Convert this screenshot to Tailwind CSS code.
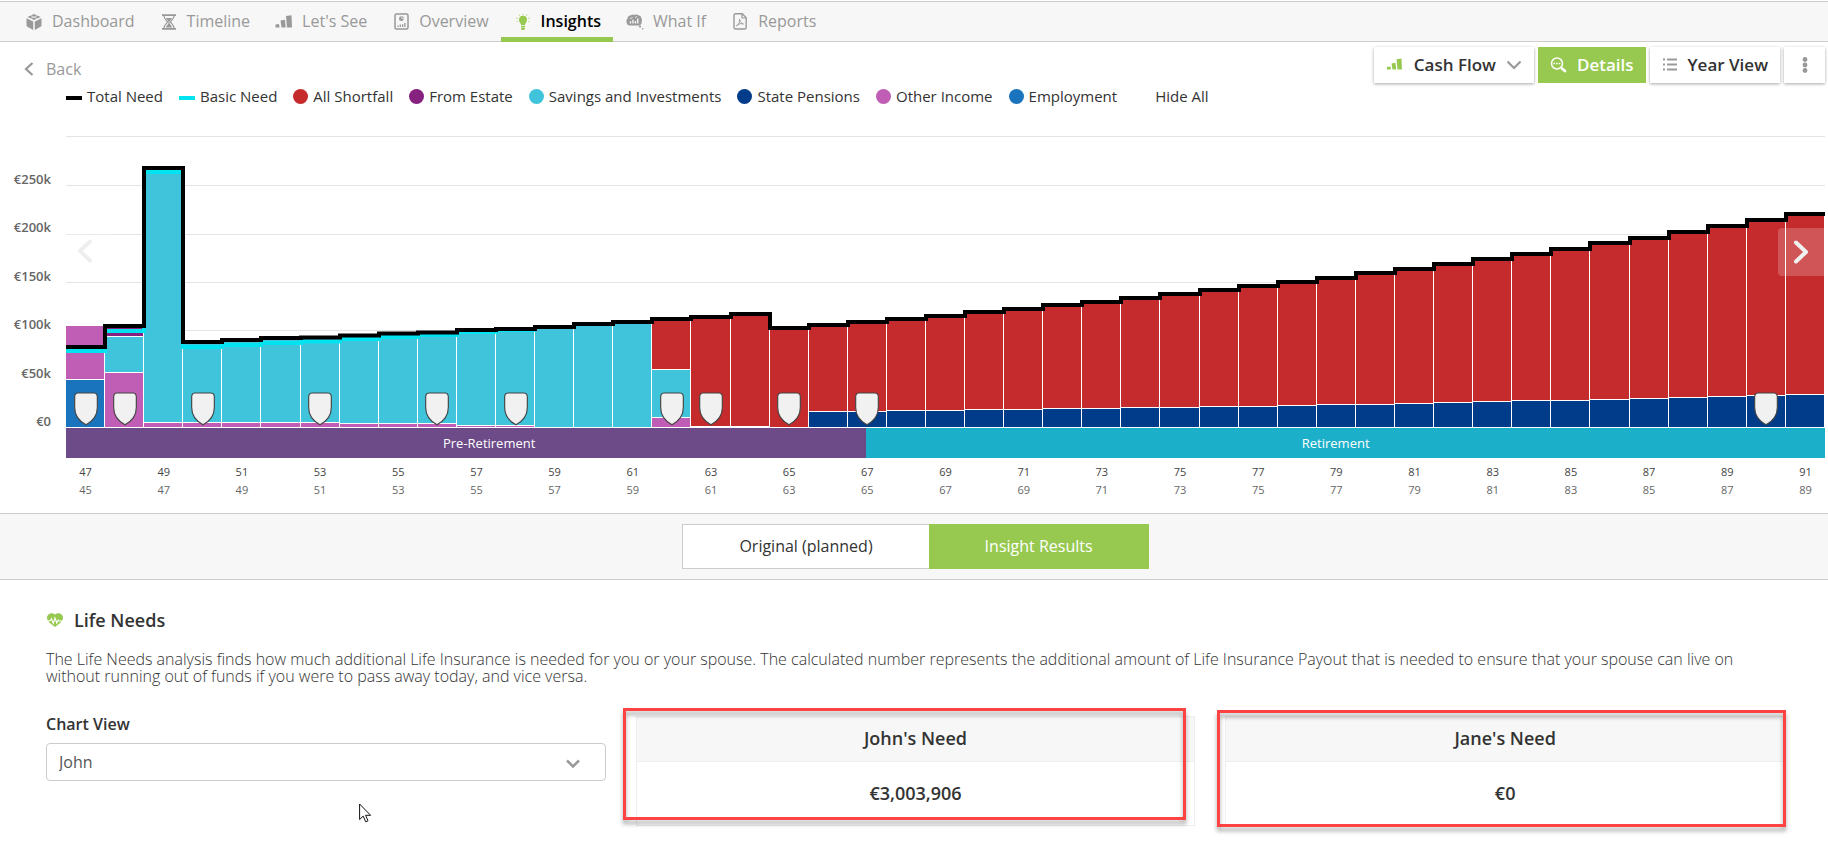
<!DOCTYPE html>
<html lang="en">
<head>
<meta charset="utf-8">
<meta name="viewport" content="width=device-width, initial-scale=1">
<title>Insights – Life Needs</title>
<script src="https://cdn.jsdelivr.net/npm/@tailwindcss/browser@4"></script>
</head>
<body class="bg-white font-['Open_Sans',sans-serif] text-base text-[#333]">

<nav class="mt-px flex h-[41px] border-y border-[#ccc] bg-[#f7f7f7] pl-3 leading-[38px] text-[#999]" aria-label="Main">
  <a href="#" class="flex gap-2 px-3"><span class="flex w-5 items-center justify-center">
    <svg class="h-4 w-4" viewBox="0 0 16 16" fill="currentColor"><path d="M8 0l6.600 2.900L8 6 1.400 2.900zM.500 4.300l6.700 3.200V16L1.500 12.800C.900 12.500.500 12 .500 11.300zM15.500 4.300L8.800 7.500V16l5.700-3.200c.600-.300 1-.800 1-1.500z"/><path d="M4.500 1.500l7 3.300M11.500 1.500l-7 3.300" stroke="#f7f7f7" stroke-width=".7"/></svg></span>Dashboard</a>
  <a href="#" class="flex gap-2 px-3"><span class="flex w-5 items-center justify-center">
    <svg class="h-4 w-4" viewBox="0 0 16 16" fill="none" stroke="currentColor"><path d="M1 1.200h14M1 14.800h14" stroke-width="1.800"/><path d="M3 2c0 3.300 3 4.500 3.500 6C6 9.500 3 10.700 3 14M13 2c0 3.300-3 4.500-3.500 6 .500 1.500 3.500 2.700 3.500 6" stroke-width="1.200"/><path d="M4.800 4h6.400L8.600 7.500v2l2.800 4H4.600l2.800-4v-2z" fill="currentColor" stroke="none"/></svg></span>Timeline</a>
  <a href="#" class="flex gap-2 px-3"><span class="flex w-5 items-center justify-center">
    <svg class="h-4 w-[18px]" viewBox="0 0 18 16" fill="currentColor"><path d="M.500 10.500l3.500-.500.500 3.500H.500zM5.500 6.500L10 5.800l.700 7.700H6.500zM11 2l5.500-.800.500 12.300h-5z"/></svg></span>Let's See</a>
  <a href="#" class="flex gap-2 px-3"><span class="flex w-5 items-center justify-center">
    <svg class="h-[17px] w-[15px]" viewBox="0 0 15 17" fill="none" stroke="currentColor"><rect x="1" y="1" width="13" height="15" rx="1.500" stroke-width="1.500"/><path d="M7.500 3.300v2.400h2.300A2.400 2.400 0 1 1 7.500 3.300z" fill="currentColor" stroke="none"/><path d="M8.400 3v1.700h1.800" stroke-width=".8"/><path d="M4 14v-1.500M6.300 14v-2.500M8.600 14v-2.800M10.900 14v-4" stroke-width="1.300"/></svg></span>Overview</a>
  <a href="#" aria-current="page" class="-mb-px flex gap-2 px-3 font-semibold text-black shadow-[inset_0_-5px_#97c950]"><span class="flex w-5 items-center justify-center text-[#97c950]">
    <svg class="h-4 w-[14px]" viewBox="0 0 14 16" fill="currentColor"><path d="M7 1.800a4 4 0 0 1 4 4c0 1.400-.6 2.300-1.200 3.200-.5.700-.8 1.300-.8 2H5c0-.700-.3-1.300-.8-2C3.600 8.100 3 7.200 3 5.800a4 4 0 0 1 4-4zM5 11.800h4v1.100H5zM5 13.600h4v1L8.200 16H5.800L5 14.600z"/><path d="M7 0v1M3 .700l.6 1M11 .700l-.6 1M.3 4l1.400.300M13.700 4l-1.400.300M.8 7.800l1-.4M13.200 7.800l-1-.4" stroke="currentColor" stroke-width=".8"/></svg></span>Insights</a>
  <a href="#" class="flex gap-2 px-3"><span class="flex w-5 items-center justify-center">
    <svg class="h-4 w-[18px]" viewBox="0 0 18 16" fill="currentColor"><path d="M5 1.200C6 .3 7.800.2 8.800 1c1.300-.7 3-.5 4 .500 1.400.1 2.500 1.300 2.500 2.700.8 1 .9 2.500.3 3.700.2 1.700-.8 3.200-2.600 3.600H3.800C1.800 11.500.4 10 .7 8.200c-.6-1.200-.3-2.700.8-3.500C1.500 2.700 3 1.300 5 1.200z"/><path d="M4.500 9.500V7.200M7 9.500V5.800M9.500 9.500V7M11.800 9.500v-5" stroke="#f7f7f7" stroke-width="1.400"/><path d="M4 4.800l2.500-1.300M9 3.500l2-.9" stroke="#f7f7f7" stroke-width=".8"/><circle cx="14" cy="12.600" r="1.100"/><circle cx="16.700" cy="14.800" r=".8"/></svg></span>What If</a>
  <a href="#" class="flex gap-2 px-3"><span class="flex w-5 items-center justify-center">
    <svg class="h-[17px] w-[14px]" viewBox="0 0 14 17" fill="none" stroke="currentColor"><path d="M2.500.800H9.300L13.200 4.700V14.500a1.500 1.500 0 0 1-1.500 1.500H2.500A1.500 1.500 0 0 1 1 14.500V2.300A1.500 1.500 0 0 1 2.500.800z" stroke-width="1.400"/><path d="M9 1v4h4" stroke-width="1.200"/><path d="M6.500 6c.6 3-1 5.600-3 7 .2-1.500 4-3 7-2-1.700-.2-3.600-2-4-5z" stroke-width=".9"/></svg></span>Reports</a>
</nav>

<main>
  <section aria-label="Cash flow chart">
    <div class="flex items-start justify-between pr-[3px]">
      <div class="pt-[15px]">
        <a href="#" class="ml-6 flex h-6 items-center gap-3 text-[#999]">
          <svg class="h-[14px] w-[10px]" viewBox="0 0 10 14" fill="none" stroke="currentColor" stroke-width="2.200"><path d="M8.500 1L2 7l6.500 6"/></svg>Back</a>
        <div class="ml-[66px] mt-[5px] flex flex-wrap items-center gap-x-4 text-[15px] leading-5">
          <span class="flex items-center gap-[5px]"><i class="mt-1 h-1 w-4 bg-black"></i>Total Need</span>
          <span class="flex items-center gap-[5px]"><i class="mt-1 h-1 w-4 bg-[#00e3f0]"></i>Basic Need</span>
          <span class="flex items-center gap-[5px]"><i class="size-[15px] rounded-full bg-[#c52b2d]"></i>All Shortfall</span>
          <span class="flex items-center gap-[5px]"><i class="size-[15px] rounded-full bg-[#87217f]"></i>From Estate</span>
          <span class="flex items-center gap-[5px]"><i class="size-[15px] rounded-full bg-[#3fc4db]"></i>Savings and Investments</span>
          <span class="flex items-center gap-[5px]"><i class="size-[15px] rounded-full bg-[#003c8a]"></i>State Pensions</span>
          <span class="flex items-center gap-[5px]"><i class="size-[15px] rounded-full bg-[#c05db4]"></i>Other Income</span>
          <span class="flex items-center gap-[5px]"><i class="size-[15px] rounded-full bg-[#1974bd]"></i>Employment</span>
          <button type="button" class="ml-[22px]">Hide All</button>
        </div>
      </div>
      <div class="flex gap-1 pt-[5px] text-[17px] font-semibold">
        <button type="button" class="flex h-9 items-center gap-[10px] bg-white px-3 shadow-[0_1px_3px_rgba(0,0,0,0.35)]">
          <svg class="h-4 w-[18px] text-[#97c950]" viewBox="0 0 18 16" fill="currentColor"><path d="M1 10l3.500-.500.300 3H1zM5.500 6.500L9.500 5.800l.700 6.700H6.500zM10.500 2.300l5-.800.500 11h-4.500z"/></svg>Cash Flow
          <svg class="h-[10px] w-4" viewBox="0 0 16 10" fill="none" stroke="#999" stroke-width="2.200"><path d="M1.500 1.500L8 8l6.500-6.500"/></svg></button>
        <button type="button" class="flex h-9 items-center gap-[10px] bg-[#97c950] px-3 text-white">
          <svg class="h-4 w-[17px]" viewBox="0 0 17 16" fill="none" stroke="currentColor"><circle cx="7" cy="6.500" r="5.500" stroke-width="1.500"/><path d="M3.500 6.500h7" stroke-width="1.500" stroke-dasharray="1.600 1"/><path d="M11 10.500l1.200 1.100" stroke-width="1.500"/><path d="M12 11.500l3 2.500" stroke-width="2.800" stroke-linecap="round"/></svg>Details</button>
        <button type="button" class="flex h-9 items-center gap-[10px] bg-white px-3 shadow-[0_1px_3px_rgba(0,0,0,0.35)]">
          <svg class="h-4 w-4" viewBox="0 0 16 16" fill="none" stroke="#999" stroke-width="2"><path d="M1 2.500h2M1 7.500h2M1 12.500h2M5 2.500h10M5 7.500h10M5 12.500h10"/></svg>Year View</button>
        <button type="button" aria-label="More" class="flex h-9 w-[41px] items-center justify-center bg-white shadow-[0_1px_3px_rgba(0,0,0,0.35)]">
          <svg class="h-4 w-[6px]" viewBox="0 0 6 16" fill="#999"><circle cx="3" cy="2.500" r="2.400"/><circle cx="3" cy="8" r="2.400"/><circle cx="3" cy="13.500" r="2.400"/></svg></button>
      </div>
    </div>

    <div class="mt-6 flex pr-[3px]">
      <div class="-mb-[3px] flex w-[66px] flex-col items-end justify-between pr-[15px] pt-[39px] text-[13px] font-semibold leading-5 text-[#666]">
        <span>€250k</span><span>€200k</span><span>€150k</span><span>€100k</span><span>€50k</span><span>€0</span>
      </div>
      <div id="plot" class="relative min-w-0 flex-1">
        <svg id="bars" class="block h-[298px] w-full" viewBox="0 130 1759 298" preserveAspectRatio="none" role="img" aria-label="Yearly need and income by source"></svg>
        <button type="button" aria-label="Earlier years" class="absolute left-0 top-[97px] flex h-12 w-[46px] items-center justify-center bg-white/20 pr-2">
          <svg class="h-6 w-4" viewBox="0 0 16 24" fill="none" stroke="#eee" stroke-width="4" stroke-linecap="round" stroke-linejoin="round"><path d="M13 2.500L3 12l10 9.500"/></svg></button>
        <button type="button" aria-label="Later years" class="absolute right-px top-[98px] flex h-12 w-[46px] items-center justify-center rounded-l bg-white/20">
          <svg class="h-6 w-4" viewBox="0 0 16 24" fill="none" stroke="#f0f0f0" stroke-width="4" stroke-linecap="round" stroke-linejoin="round"><path d="M3 2.500L13 12 3 21.500"/></svg></button>
      </div>
    </div>
    <div class="ml-[66px] mr-[3px]">
      <div class="flex h-[30px] text-center text-[13px] leading-[30px] text-white">
        <div class="w-[45.5%] bg-[#6d4a88] pl-[46px]">Pre-Retirement</div>
        <div class="flex-1 bg-[#1cafc9] pr-5">Retirement</div>
      </div>
      <div id="ages" class="mt-[5px] grid grid-cols-45 text-[11px] leading-[18px]"></div>
    </div>
  </section>

  <div class="mt-[14px] flex justify-center border-y border-[#ccc] bg-[#f7f7f7] py-[10px] pl-[3px]">
    <button type="button" class="h-[45px] border border-r-0 border-[#ccc] bg-white px-14 pb-[2px]">Original (planned)</button>
    <button type="button" class="h-[45px] bg-[#97c950] px-14 pb-[2px] text-white">Insight Results</button>
  </div>

  <section class="relative pb-6 pl-[46px] pr-[43px] pt-7">
    <h2 class="flex items-center gap-[10px] text-lg font-semibold leading-6">
      <svg class="h-[14px] w-[18px] text-[#97c950]" viewBox="0 0 18 14" fill="currentColor"><path d="M9 1.800C10.300.300 12.500-.1 14.400.8c2.400 1.100 3.200 3.700 2.200 6C15.500 9.300 12 12 9 14 6 12 2.500 9.300 1.400 6.800c-1-2.300-.2-4.900 2.200-6C5.500-.1 7.700.300 9 1.800z"/><path d="M1 7.800h3.300l1.200-2 1.800 4.500L9 5l1.800 5 1.500-3 .7 1H17" fill="none" stroke="#fff" stroke-width="1.100"/></svg>Life Needs</h2>
    <p class="mt-[19px] font-light leading-[17px]">The Life Needs analysis finds how much additional Life Insurance is needed for you or your spouse. The calculated number represents the additional amount of Life Insurance Payout that is needed to ensure that your spouse can live on without running out of funds if you were to pass away today, and vice versa.</p>
    <div class="mt-[31px] grid grid-cols-3 gap-[30px]">
      <div>
        <label for="view" class="block h-[27px] font-semibold leading-4">Chart View</label>
        <div class="relative">
          <select id="view" class="h-[38px] w-full appearance-none rounded border border-[#ccc] bg-white px-3 text-[#555]"><option>John</option><option>Jane</option></select>
          <svg class="pointer-events-none absolute right-[26px] top-4 h-[10px] w-[14px]" viewBox="0 0 14 10" fill="none" stroke="#999" stroke-width="2.500"><path d="M1 1.500l6 6 6-6"/></svg>
        </div>
      </div>
      <div class="relative border border-[#eee] text-center text-lg font-semibold">
        <h3 class="h-[45px] border-b border-[#eee] bg-[#f7f7f7] leading-[43px]">John's Need</h3>
        <p class="h-[63px] leading-[63px]">€3,003,906</p>
        <div class="pointer-events-none absolute -left-[14px] -top-[9px] bottom-[5px] right-2 border-3 border-[#ff4343] drop-shadow-[0_4px_2px_rgba(0,0,0,0.35)]"></div>
      </div>
      <div class="relative border border-[#eee] text-center text-lg font-semibold">
        <h3 class="h-[45px] border-b border-[#eee] bg-[#f7f7f7] leading-[43px]">Jane's Need</h3>
        <p class="h-[63px] leading-[63px]">€0</p>
        <div class="pointer-events-none absolute -left-[9px] -top-[7px] -bottom-[2px] -right-[2px] border-3 border-[#ff4343] drop-shadow-[0_4px_2px_rgba(0,0,0,0.35)]"></div>
      </div>
    </div>
    <svg class="pointer-events-none absolute left-[359px] top-[223px] h-5 w-[13px]" viewBox="0 0 13 20" fill="#fff" stroke="#111" stroke-width="1"><path d="M.600 1v15.500l3.600-3.400 2.500 5.700 2.300-1-2.400-5.500h5z"/></svg>
  </section>
</main>

<script>
  const N = 45, W = 1759, BASE = 427, step = W / N;
  const X = i => Math.round(i * step);
  const RED = '#c52b2d', ESTATE = '#87217f', SAVE = '#3fc4db', PENSION = '#003c8a', OTHER = '#c05db4', JOB = '#1974bd';
  const total = [347,326,168,342,340,338,337.5,335.5,333.5,332.5,330,329,327,324,322,319,317,314,328,325,322,319,316,312,309,305,302,298,294,290,286,282,278,273,269,264,259,254,249,243,238,232,226,220,214];
  const basic = [351,331,172,347,345,343,341.5,339,337,335,332,330];
  const pension = [411,411,410,410,409,409,408,408,407,407,406,406,405,404,404,403,402,401,400,400,399,398,397,396,395,394];
  const stacks = total.map((t, i) => {
    if (i === 0) return [[326, OTHER], [379, JOB]];
    if (i === 1) return [[326, ESTATE], [336, SAVE], [372, OTHER]];
    if (i <= 6) return [[t, SAVE], [422, OTHER]];
    if (i <= 9) return [[t, SAVE], [423, OTHER]];
    if (i <= 11) return [[t, SAVE], [425, OTHER]];
    if (i <= 14) return [[t, SAVE]];
    if (i === 15) return [[t, RED], [369, SAVE], [417, OTHER]];
    if (i <= 17) return [[t, RED], [426, OTHER]];
    if (i === 18) return [[t, RED]];
    return [[t, RED], [pension[i - 19], PENSION]];
  });
  let s = '';
  for (const y of [136, 185, 234, 282, 330]) s += `<rect x="0" y="${y}" width="${W}" height="1" fill="#e4e4e4"/>`;
  stacks.forEach((st, i) => st.forEach(([y, c], k) => {
    const top = k ? y + 1 : y, end = k + 1 < st.length ? st[k + 1][0] : BASE;
    if (k) s += `<rect x="${X(i)}" y="${y}" width="${X(i + 1) - X(i)}" height="1" fill="#fff"/>`;
    s += `<rect x="${X(i)}" y="${top}" width="${X(i + 1) - X(i)}" height="${Math.max(0, end - top)}" fill="${c}"/>`;
    s += `<rect x="${X(i + 1) - 1}" y="${top}" width="1" height="${BASE - top}" fill="#fff"/>`;
  }));
  const line = a => a.map((y, i) => `${i ? 'L' : 'M'}${X(i)} ${y}H${X(i + 1)}`).join('');
  s = `<g shape-rendering="crispEdges">${s}</g>`
    + `<path d="${line(basic)}" fill="none" stroke="#00e3f0" stroke-width="4"/>`
    + `<path d="${line(total)}" fill="none" stroke="#000" stroke-width="4"/>`;
  document.getElementById('bars').innerHTML = s;

  const plot = document.getElementById('plot');
  for (const i of [0, 1, 3, 6, 9, 11, 15, 16, 18, 20, 43])
    plot.insertAdjacentHTML('beforeend', `<svg class="absolute bottom-[2px] h-[34px] w-6 -translate-x-1/2" style="left:${(i + .5) / N * 100}%" viewBox="0 0 25 35" fill="#f1f1f1" stroke="#444" stroke-width="1.200"><path d="M4 .800H21Q24.300 1.200 24.300 5V16C24.300 24 19 30.500 12.500 34 6 30.500.700 24 .700 16V5Q.700 1.200 4 .800z"/></svg>`);

  document.getElementById('ages').innerHTML = total.map((_, i) => i % 2 ? '<div></div>'
    : `<div class="text-center"><div class="text-[#444]">${47 + i}</div><div class="text-[#666]">${45 + i}</div></div>`).join('');
</script>
</body>
</html>
